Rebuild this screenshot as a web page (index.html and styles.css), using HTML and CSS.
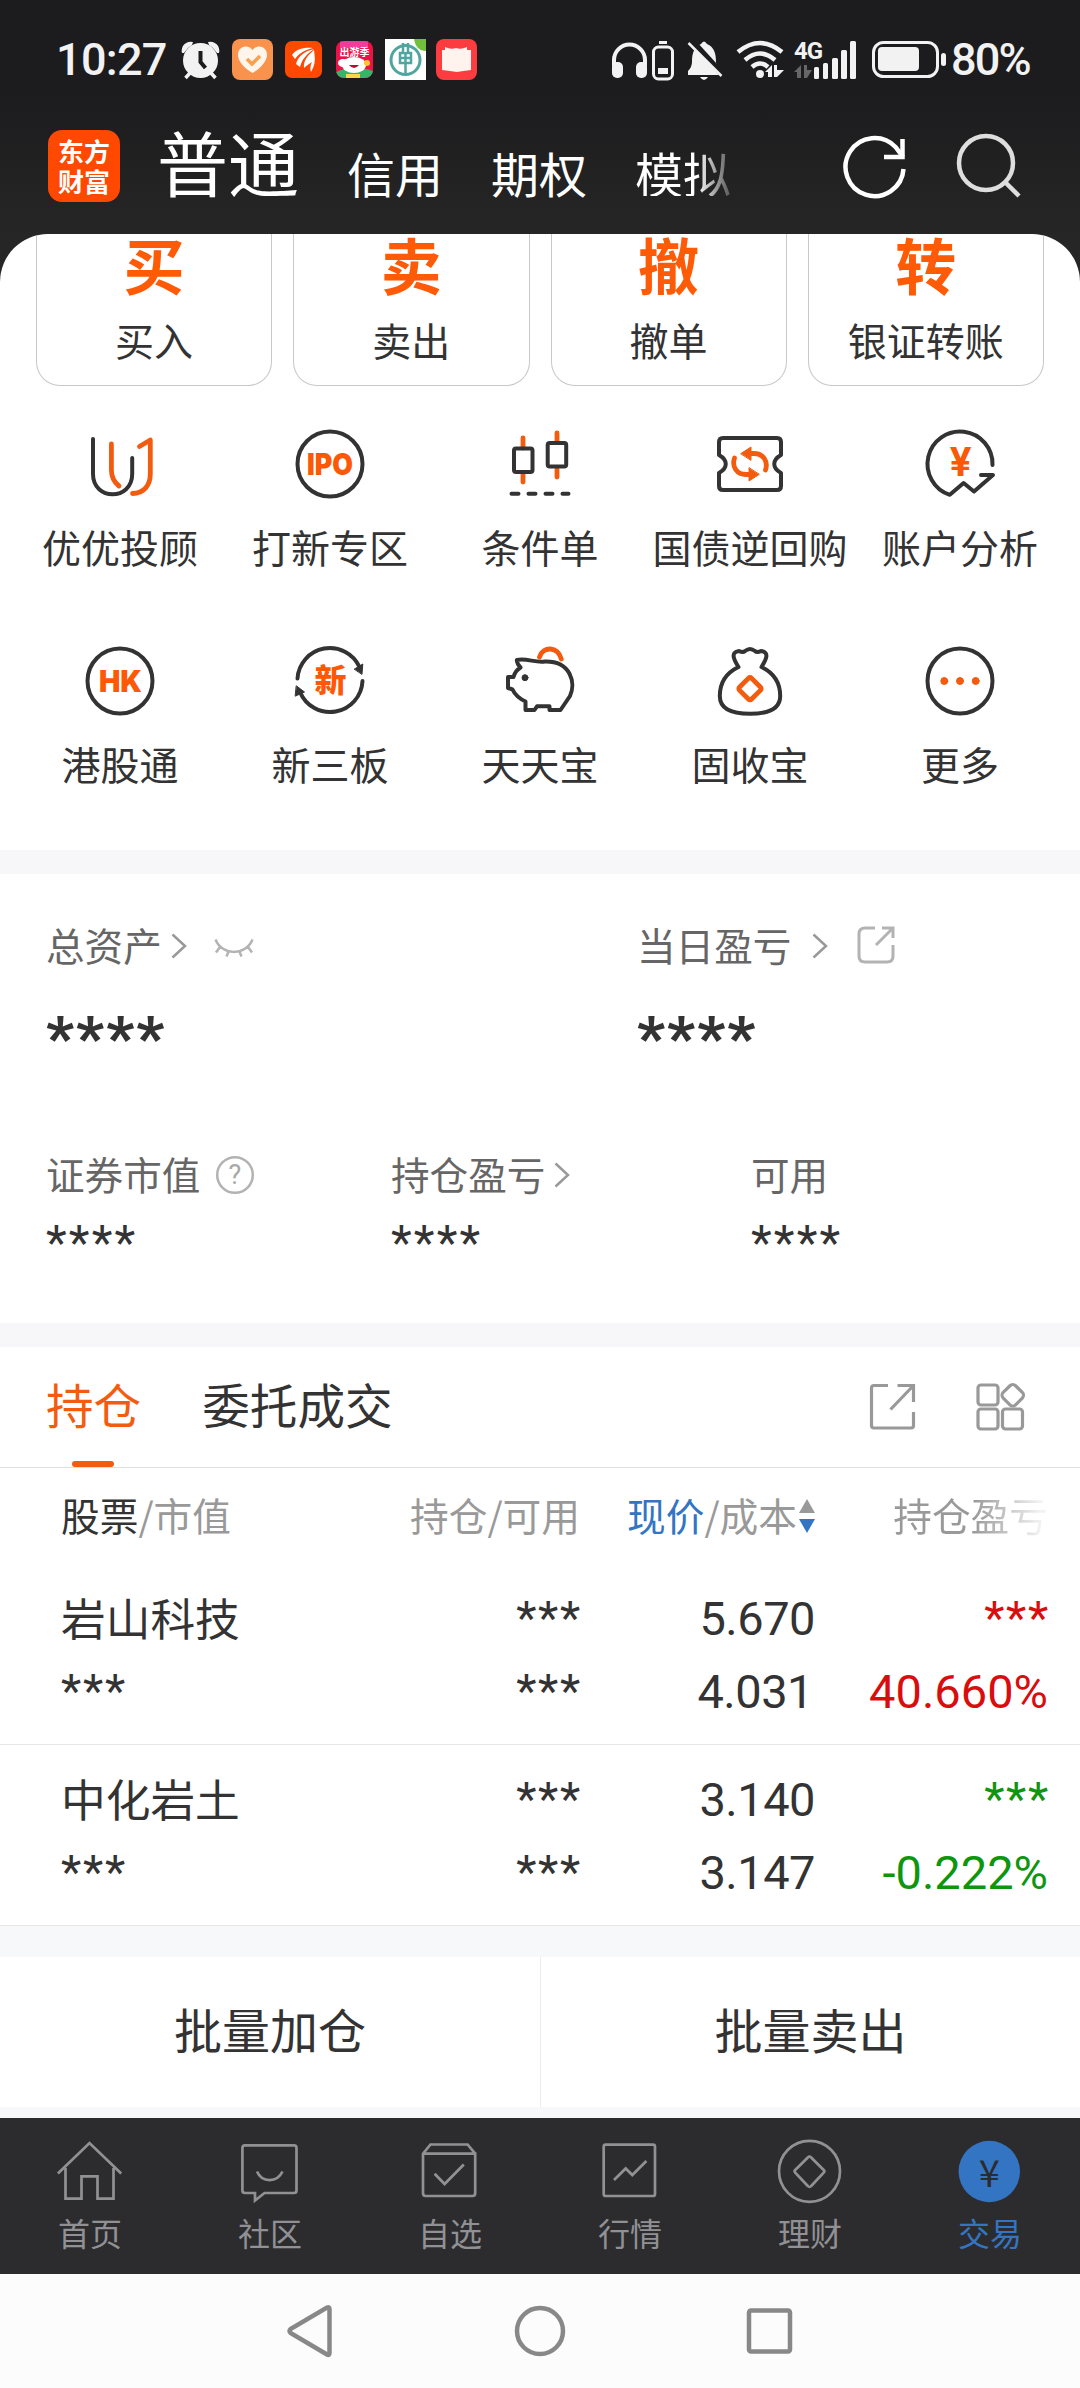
FILE: index.html
```html
<!DOCTYPE html>
<html lang="zh-CN">
<head>
<meta charset="utf-8">
<title>交易</title>
<link rel="stylesheet" href="styles.css">
</head>
<body>
<div class="app">
  <header class="top">
    <div class="status">
      <span class="clock">10:27</span>
      <svg width="47" height="48" viewBox="178 36 47 48"><g fill="#f2f2f2"><circle cx="200.500" cy="60.500" r="17.500"/><path d="M182 53a9 9 0 0 1 11-11l-1 3a22 22 0 0 0-8 8zM219 53a9 9 0 0 0-11-11l1 3a22 22 0 0 1 8 8z"/></g><path d="M190 73l-4.500 5M211 73l4.500 5" stroke="#f2f2f2" stroke-width="3.500"/><path d="M200.500 51v11l5 6" fill="none" stroke="#1c1c1e" stroke-width="4"/></svg>
      <svg width="54" height="48" viewBox="225 36 54 48"><rect x="232" y="39" width="41" height="41" rx="8" fill="#f9924c"/><path d="M252.500 73C244 68 238 61 238 55c0-9 10-11 14.500-5C257 44 267 46 267 55c0 6-6 13-14.500 18z" fill="#fff5ea"/><path d="M247 59l5 5 8-8" fill="none" stroke="#f9a050" stroke-width="3.500"/></svg>
      <svg width="50" height="48" viewBox="279 36 50 48"><rect x="285" y="41" width="37" height="37" rx="7" fill="#ff4800"/><path d="M292 55c4-6 12-8 21-7-8 2-14 5-18 11zM296 64c2-8 9-13 18-15-7 5-12 10-14 18zM304 68c-1-7 4-13 10-18 1 8 2 14-3 22-1-3-1-6 1-10-3 2-6 4-8 6z" fill="#fff"/></svg>
      <svg width="50" height="48" viewBox="329 36 50 48"><clipPath id="trip"><rect x="336" y="41" width="37" height="37" rx="8"/></clipPath><g clip-path="url(#trip)"><path fill="#ea1246" d="M336 41h37v37h-37z"/><path fill="#f03c9b" d="M340 41h28v7h-28z"/><path fill="#35b56b" d="M336 72q16-8 37-1v7h-37z"/><ellipse cx="354" cy="65" rx="12" ry="8" fill="#fff"/><ellipse cx="343" cy="63" rx="5" ry="4" fill="#fff"/><path d="M349 65q5 6 10 0z" fill="#b80b31"/><path d="M346 74h14v4h-14z" fill="#ffd54c"/><circle cx="367" cy="63" r="3" fill="#ffc52e"/></g><text x="354.500" y="56" class="trip-label">出游季</text></svg>
      <svg width="52" height="48" viewBox="379 36 52 48"><path fill="#fff" d="M385 39h41v41h-41z"/><path fill="#72bf3c" d="M414 39h12v12q-10 0-12-12z"/><g fill="none" stroke="#50a69f"><circle cx="405.500" cy="60" r="14.500" stroke-width="3"/><path stroke-width="2.500" d="M405.500 64v10M403 43v10h-3v10h11V53h-3V43M400 58h11M405.500 52v11"/></g></svg>
      <svg width="50" height="48" viewBox="431 36 50 48"><rect x="436" y="39" width="41" height="41" rx="8" fill="#fd3c40"/><path d="M442 50h3v-3q6 3 11 1 5 2 11-1v3h4v20q-8 1-14 2-7-1-15-2z" fill="#fff3ee"/></svg>
      <div class="status-right">
        <svg width="44" height="48" viewBox="605 36 44 48"><path d="M614 66v-6a15.500 15.500 0 0 1 31 0v6" fill="none" stroke="#f2f2f2" stroke-width="4"/><rect x="612" y="62" width="11" height="16" rx="5" fill="#f2f2f2"/><rect x="636" y="62" width="11" height="16" rx="5" fill="#f2f2f2"/></svg>
        <svg width="31" height="48" viewBox="649 36 31 48"><rect x="653.500" y="47" width="19" height="32" rx="5" fill="none" stroke="#f2f2f2" stroke-width="3"/><path d="M659 41h8v3h-8zM658 68h10v6h-10z" fill="#f2f2f2"/></svg>
        <svg width="51" height="48" viewBox="680 36 51 48"><path d="M688 75v-4q4-4 4-9c0-9 2-15 9-18q3-5 6 0c7 3 9 9 9 18q0 5 4 9v4z" fill="#f2f2f2"/><path d="M700 77h8q-4 6-8 0z" fill="#f2f2f2"/><path d="M692 41l31 34" stroke="#1c1c1e" stroke-width="6"/><path d="M688.500 43l33 33" stroke="#f2f2f2" stroke-width="2.500"/></svg>
        <svg width="58" height="48" viewBox="731 36 58 48"><g fill="none" stroke="#f2f2f2" stroke-width="4.500"><path d="M738 52q22-18 44 0M745 60q15-13 30 0M752 67q8-7 16 0"/></g><circle cx="760" cy="74" r="4" fill="#f2f2f2"/><path d="M765 72l7-7v12h-4v-5zM774 77V65h3v5h7l-7 7z" fill="#f2f2f2"/></svg>
        <svg width="73" height="48" viewBox="789 36 73 48"><text x="794" y="59" class="net">4G</text><path d="M794 72l7-7v13h-4v-6zM804 78V65h3v5h5l-5 8z" fill="#666"/><g fill="#f2f2f2"><rect x="814" y="67" width="5" height="12" rx="1.500"/><rect x="823" y="63" width="5" height="16" rx="1.500"/><rect x="832" y="58" width="6" height="21" rx="1.500"/><rect x="841" y="50" width="6" height="29" rx="1.500"/><rect x="850" y="41" width="6" height="38" rx="1.500"/></g></svg>
        <svg width="88" height="48" viewBox="862 36 88 48"><rect x="873.500" y="42.500" width="64" height="34" rx="10" fill="none" stroke="#f2f2f2" stroke-width="3"/><rect x="878" y="47" width="41" height="24" rx="4" fill="#f2f2f2"/><rect x="941" y="53" width="5" height="13" rx="2.500" fill="#f2f2f2"/></svg>
        <span class="percent">80%</span>
      </div>
    </div>
    <nav class="accounts">
      <div class="logo"><span>东方</span><span>财富</span></div>
      <span class="account account-active">普通</span>
      <span class="account">信用</span>
      <span class="account">期权</span>
      <span class="account account-fade">模拟</span>
      <div class="top-actions">
        <svg width="70" height="70" viewBox="842 131 70 70" fill="none" stroke="#fff" stroke-width="4.500"><path d="M904.500 168a29 29 0 1 1-8-22L904 156"/><path d="M903.500 138v18H885"/></svg>
        <svg width="70" height="70" viewBox="955 132 70 70" fill="none" stroke="#dedede" stroke-width="4.500"><circle cx="987" cy="163" r="27"/><path d="M1006 182l14 14"/></svg>
      </div>
    </nav>
  </header>

  <main class="sheet">
    <section class="quick">
      <div class="quick-card"><b>买</b><span>买入</span></div>
      <div class="quick-card"><b>卖</b><span>卖出</span></div>
      <div class="quick-card"><b>撤</b><span>撤单</span></div>
      <div class="quick-card"><b>转</b><span>银证转账</span></div>
    </section>

    <section class="services">
      <div class="service"><svg viewBox="0 0 80 80"><path d="M13 15V50C13 77 52.200 77 52.200 50V34"/><path class="o" d="M31.400 20V46Q31.400 56 39 62M52.500 69.500C64 69.500 70.300 61 70.300 50V16L59.500 22.500"/></svg><span>优优投顾</span></div>
      <div class="service"><svg viewBox="0 0 80 80"><circle cx="40" cy="40" r="32.500"/><text x="17" y="51" textLength="46" lengthAdjust="spacingAndGlyphs" class="word">IPO</text></svg><span>打新专区</span></div>
      <div class="service"><svg viewBox="0 0 80 80"><path class="o" d="M23 14V24M23 50V58M57 9V18M57 45V53"/><rect x="14" y="24.500" width="18.500" height="23.500" rx="2"/><rect x="47.700" y="19" width="18.500" height="23.500" rx="2"/><path d="M11.500 69.700h7M28.500 69.700h7M45.500 69.700h7M62.500 69.700h6"/></svg><span>条件单</span></div>
      <div class="service"><svg viewBox="0 0 80 80"><path d="M13 14H67Q71 14 71 18V31C62 36 62 44 71 49V62Q71 66 67 66H13Q9 66 9 62V49C18 44 18 36 9 31V18Q9 14 13 14z"/><path class="o" d="M55.500 46C58.500 37 53 29.500 44 29.500H38M24.500 34C21.500 43 27 50.500 36 50.500H42"/><path class="of" d="M31 29.500L41 23V36zM49 50.500L39 57V44z"/></svg><span>国债逆回购</span></div>
      <div class="service"><svg viewBox="0 0 80 80"><path d="M72.500 41A32.500 32.500 0 1 0 29.800 70.800L43.600 59L54 67.500L73 51H61"/><text x="40.500" y="51.500" class="yen">¥</text></svg><span>账户分析</span></div>
      <div class="service"><svg viewBox="0 0 80 80"><circle cx="40" cy="40" r="32.500"/><text x="19" y="51" textLength="43" lengthAdjust="spacingAndGlyphs" class="word">HK</text></svg><span>港股通</span></div>
      <div class="service"><svg viewBox="0 0 80 80"><path d="M7.500 37.500A32.500 32.500 0 0 1 69.500 26M72.500 40A32.500 32.500 0 0 1 10 51"/><path class="df" d="M64.500 28L72.800 23L72 33zM6.500 45L14.500 51L5.500 55z"/><text x="40.500" y="51" class="xin">新</text></svg><span>新三板</span></div>
      <div class="service"><svg viewBox="0 0 80 80"><path d="M8 36V47L12.500 48.500Q16 56 25.500 60.500V69H34.500L37 65.300H49.500V69H60.500L70 55C76 42 71 20 45 20.500C35 22 27 17 16.800 19Q17 23 20.500 26.500Q15 30 13.500 36z"/><circle class="df" cx="25" cy="36.700" r="3"/><path class="o" d="M39.500 16C43 5 58 5 61.300 18"/></svg><span>天天宝</span></div>
      <div class="service"><svg viewBox="0 0 80 80"><path d="M28.500 26C16 32 9.800 42 9.800 55C9.800 67 20 72.800 40 72.800S70.200 67 70.200 55C70.200 42 64 32 51.500 26C56 19 60 11 51 10Q47 12 45 10Q40 6 35 10Q33 12 29 10C20 11 24 19 28.500 26z"/><rect class="o" x="31.500" y="39.200" width="17" height="17" rx="2" transform="rotate(45 40 47.700)"/></svg><span>固收宝</span></div>
      <div class="service"><svg viewBox="0 0 80 80"><circle cx="40" cy="40" r="32.500"/><g class="of"><circle cx="24.300" cy="40" r="3.500"/><circle cx="40" cy="40" r="3.500"/><circle cx="55.700" cy="40" r="3.500"/></g></svg><span>更多</span></div>
    </section>

    <section class="assets">
      <div class="asset-main">
        <div class="metric">
          <div class="metric-label">总资产<svg class="chev" viewBox="0 0 16 26"><path d="M1.500 1.500L14 13L1.500 24.500"/></svg><svg class="eye" viewBox="0 0 40 20"><path d="M1.500 1.500C8 18 32 18 38.500 1.500M6 9L2 14.500M14.500 13.500L12.500 18.500M25.500 13.500L27.500 18.500M34 9L38 14.500"/></svg></div>
          <div class="metric-value">****</div>
        </div>
        <div class="metric">
          <div class="metric-label">当日盈亏<svg class="chev chev-wide" viewBox="0 0 16 26"><path d="M1.500 1.500L14 13L1.500 24.500"/></svg><svg class="share-small" viewBox="0 0 38 38"><path d="M18 2H8Q2 2 2 8V30Q2 36 8 36H30Q36 36 36 30V19M25 2H36V12M36 2L19 19"/></svg></div>
          <div class="metric-value">****</div>
        </div>
      </div>
      <div class="asset-sub">
        <div class="metric">
          <div class="metric-label">证券市值<svg class="help" viewBox="0 0 40 40"><circle cx="20" cy="20" r="17.800"/><text x="20" y="29">?</text></svg></div>
          <div class="metric-value">****</div>
        </div>
        <div class="metric">
          <div class="metric-label">持仓盈亏<svg class="chev" viewBox="0 0 16 26"><path d="M1.500 1.500L14 13L1.500 24.500"/></svg></div>
          <div class="metric-value">****</div>
        </div>
        <div class="metric">
          <div class="metric-label">可用</div>
          <div class="metric-value">****</div>
        </div>
      </div>
    </section>

    <section class="holdings">
      <div class="tabs">
        <span class="tab tab-active">持仓</span>
        <span class="tab">委托成交</span>
        <div class="tab-actions">
          <svg width="48" height="48" viewBox="0 0 48 48"><path d="M19 2.500H5Q2.500 2.500 2.500 5V42.500Q2.500 45 5 45H42Q44.500 45 44.500 42.500V29M28.500 2.500H44.500V19M44 3L21.500 26.500"/></svg>
          <svg width="52" height="50" viewBox="0 0 52 50"><rect x="3" y="3" width="20" height="20" rx="3"/><rect x="3" y="27" width="20" height="20" rx="3"/><rect x="27.500" y="27" width="20" height="20" rx="3"/><rect x="29" y="4.500" width="17.500" height="17.500" rx="4" transform="rotate(45 37.700 13.300)"/></svg>
        </div>
      </div>
      <div class="row row-head">
        <span><em class="strong">股票</em>/市值</span>
        <span>持仓/可用</span>
        <span class="sorted"><em class="blue">现价</em>/成本<svg viewBox="0 0 16 34"><path fill="#999" d="M8 0L16 14H0z"/><path fill="#3375c3" d="M0 20H16L8 34z"/></svg></span>
        <span class="fade">持仓盈亏</span>
      </div>
      <div class="row row-stock">
        <span class="name">岩山科技</span><span class="stars">***</span><span>5.670</span><span class="stars up">***</span>
        <span class="stars">***</span><span class="stars">***</span><span class="narrow">4.031</span><span class="rate up">40.660%</span>
      </div>
      <div class="row row-stock">
        <span class="name">中化岩土</span><span class="stars">***</span><span>3.140</span><span class="stars down">***</span>
        <span class="stars">***</span><span class="stars">***</span><span>3.147</span><span class="rate down">-0.222%</span>
      </div>
    </section>

    <section class="batch">
      <div>批量加仓</div>
      <div>批量卖出</div>
    </section>
  </main>

  <nav class="tabbar">
    <div class="tabitem"><svg viewBox="0 0 80 80"><path d="M7.900 42.500L39.500 12L71.200 42.500M15.500 37V67.700H31.500V45.300H47.500V67.700H63.500V37"/></svg><span>首页</span></div>
    <div class="tabitem"><svg viewBox="0 0 80 80"><path d="M15 14.300H64Q66.500 14.300 66.500 17V59.500Q66.500 62 64 62H34.500L25 69.500V62H15Q12.400 62 12.400 59.500V17Q12.400 14.300 15 14.300zM27 40.500C32 52 47 52 52.500 40.500"/></svg><span>社区</span></div>
    <div class="tabitem"><svg viewBox="0 0 80 80"><path d="M13 22.700H65.200V62Q65.200 65 62.500 65H15.500Q13 65 13 62V22.700L20.500 13.500H57.600L65.200 22.700M24.600 42.700L34.600 53L53.800 33.500"/></svg><span>自选</span></div>
    <div class="tabitem"><svg viewBox="0 0 80 80"><rect x="13.700" y="13.700" width="51.300" height="51.300" rx="2"/><path d="M24 49L35.700 37.500L42.300 44L56.400 30"/></svg><span>行情</span></div>
    <div class="tabitem"><svg viewBox="0 0 80 80"><circle cx="39.500" cy="40.300" r="30.500"/><path d="M37.800 26.500Q39.500 24.500 41.200 26.500L53.700 39Q55 40.300 53.700 41.700L41.200 55Q39.500 57 37.800 55L25.200 41.700Q24 40.300 25.200 39z"/></svg><span>理财</span></div>
    <div class="tabitem tabitem-active"><svg viewBox="0 0 80 80"><circle class="disc" cx="39.300" cy="40.500" r="30.700"/><text x="39.300" y="55.500">¥</text></svg><span>交易</span></div>
  </nav>
  <footer class="sysnav">
    <svg width="50" height="56" viewBox="0 0 50 56"><path d="M42 4.500Q44.500 3.500 44.500 6V50Q44.500 53 42 51.500L5.500 30Q3.500 28 5.500 26z"/></svg>
    <svg width="56" height="56" viewBox="0 0 56 56"><circle cx="28" cy="28" r="23"/></svg>
    <svg width="50" height="56" viewBox="0 0 50 56"><rect x="4" y="7.500" width="41" height="41" rx="2"/></svg>
  </footer>
</div>
</body>
</html>
```

FILE: styles.css
```css
* { box-sizing: border-box; }
body {
  margin: 0;
  background: #fff;
  color: #333;
  font-family: "Noto Sans CJK SC", sans-serif;
}
svg { display: block; flex: none; }
em { font-style: normal; }
.app { width: 1080px; height: 2388px; display: flex; flex-direction: column; overflow: hidden; background: #262626; }

/* Header */
.top { height: 234px; flex: none; background: linear-gradient(#1c1c1e 40%, #262626); }
.status { display: flex; align-items: center; height: 120px; padding-left: 56px; }
.clock, .percent { font: 500 45px/48px Roboto, sans-serif; color: #f2f2f2; }
.clock { width: 122px; letter-spacing: -0.7px; }
.percent { letter-spacing: -1.8px; padding-left: 1px; }
.status-right { display: flex; align-items: center; margin-left: 124px; }
.net { font: 700 24px Roboto, sans-serif; fill: #f2f2f2; letter-spacing: -1px; }
.trip-label { font: 700 10px "Noto Sans CJK SC", sans-serif; fill: #fff; text-anchor: middle; }
.accounts { display: flex; align-items: flex-end; height: 82px; padding: 0 56px 0 48px; color: #fff; }
.logo {
  width: 72px; height: 72px; border-radius: 14px; background: #ff4800;
  display: flex; flex-direction: column; justify-content: center; align-items: center;
  font-size: 26px; font-weight: 700; line-height: 30px;
}
.account { font-size: 48px; line-height: 48px; margin: 0 48px 6px 0; }
.account-active { font-size: 71px; line-height: 71px; margin: 0 48px 6px 37px; }
.account-fade { margin-right: 0; background: linear-gradient(90deg, #fff 64%, #555 100%); -webkit-background-clip: text; background-clip: text; color: transparent; }
.top-actions { display: flex; gap: 43px; margin-left: auto; }

/* Quick trade cards */
.sheet { height: 1884px; flex: none; background: #fff; border-radius: 48px 48px 0 0; overflow: hidden; }
.quick { display: grid; grid-template-columns: repeat(4, 1fr); gap: 21px; padding: 0 36px; height: 152px; }
.quick-card {
  border: 1px solid #c8c8c8; border-top: 0; border-radius: 0 0 24px 24px;
  display: flex; flex-direction: column; align-items: center;
}
.quick-card b { font-size: 61px; line-height: 57px; font-weight: 700; color: #ff5a05; margin-top: 1px; height: 67px; }
.quick-card span { font-size: 39px; line-height: 39px; margin-top: 18px; }

/* Services */
.services { display: grid; grid-template-columns: repeat(5, 210px); grid-auto-rows: 217px; padding: 38px 15px 0; height: 464px; }
.service { display: flex; flex-direction: column; align-items: center; white-space: nowrap; }
.service svg { width: 80px; height: 80px; fill: none; stroke: #333; stroke-width: 4; stroke-linecap: round; stroke-linejoin: round; }
.service span { font-size: 39px; line-height: 40px; margin-top: 22px; }
.service .o { stroke: #f35c0e; stroke-width: 4.8; }
.service .of { fill: #f35c0e; stroke: #f35c0e; stroke-width: 1; }
.service .df { fill: #333; stroke-width: 1; }
.service text { fill: #fc5805; stroke: none; }
.service .word { font: 900 30px Inter, sans-serif; }
.service .yen { font: 700 39px Inter, sans-serif; text-anchor: middle; }
.service .xin { font: 900 32px "Noto Sans CJK SC", sans-serif; text-anchor: middle; }

/* Assets */
.assets { border-top: 24px solid #f7f7fa; border-bottom: 24px solid #f7f7fa; height: 497px; }
.asset-main { display: grid; grid-template-columns: 591px 1fr; padding: 50px 0 0 46px; height: 279px; }
.asset-sub { display: grid; grid-template-columns: 345px 360px 1fr; padding: 0 0 0 46px; }
.metric-label { display: flex; align-items: center; height: 40px; font-size: 38.6px; line-height: 40px; color: #666; }
.metric-label svg { fill: none; stroke: #b3b3b3; stroke-width: 2.5; position: relative; top: 2px; }
.metric-label .chev { width: 16px; height: 26px; margin-left: 9px; stroke: #999; }
.metric-label .chev-wide { margin-left: 21px; }
.metric-label .eye { width: 40px; height: 20px; margin-left: 27px; top: 4px; }
.metric-label .share-small { width: 38px; height: 38px; margin-left: 29px; stroke-width: 3; top: 1px; }
.metric-label .help { width: 40px; height: 40px; margin-left: 15px; }
.help text { font: 400 27px Roboto, sans-serif; fill: #a8a8a8; stroke: none; text-anchor: middle; }
.metric-value { font: 400 48px/48px Roboto, sans-serif; letter-spacing: 2.200px; margin-top: 26px; }
.asset-main .metric-value { font-size: 60px; font-weight: 900; margin-top: 50px; letter-spacing: 2.200px; }

/* Holdings */
.tabs { display: flex; align-items: center; height: 121px; padding: 0 53px 0 46px; border-bottom: 1px solid #e0e0e0; }
.tab { font-size: 47.6px; line-height: 120px; margin-right: 61px; position: relative; top: -3px; }
.tab-active { color: #f35c0e; }
.tab-active::after { content: ""; position: absolute; left: 26px; bottom: -3px; width: 42px; height: 6px; border-radius: 3px; background: #f35c0e; }
.tab-actions { display: flex; align-items: center; gap: 58px; margin-left: auto; }
.tab-actions svg { fill: none; stroke: #999; stroke-width: 3.200; }
.row { display: grid; grid-template-columns: 319px 200px 235px 233px; padding-left: 61px; text-align: right; }
.row > span:nth-child(4n+1) { text-align: left; }
.row-head { height: 96px; align-items: center; font-size: 38.7px; line-height: 92px; padding-bottom: 4px; color: #999; white-space: nowrap; }
.strong { color: #333; }
.blue { color: #3375c3; }
.sorted { display: flex; align-items: center; justify-content: flex-end; }
.sorted svg { width: 16px; height: 34px; margin: 4px 0 0 2px; }
.fade { justify-self: end; background: linear-gradient(90deg, #999 52%, #f2f2f2 95%); -webkit-background-clip: text; background-clip: text; color: transparent; }
.row-stock {
  height: 181px; padding-top: 18px; grid-auto-rows: 73px; align-content: start;
  border-bottom: 1px solid #e6e6e6; font: 400 47px/73px Roboto, sans-serif; letter-spacing: -0.500px;
}
.row-stock .name { font: 400 44.7px/70px "Noto Sans CJK SC", sans-serif; letter-spacing: 0; }
.row-stock .stars { letter-spacing: 1.700px; margin-right: -2px; line-height: 71px; }
.row-stock .rate { letter-spacing: 0; }
.narrow { padding-right: 2px; }
.up { color: #d90d0d; }
.down { color: #0f960f; }

/* Batch actions */
.batch { display: grid; grid-template-columns: 1fr 1fr; height: 193px; border-top: 31px solid #f7f8fa; border-bottom: 12px solid #f7f8fa; font-size: 48px; line-height: 143px; text-align: center; }
.batch div + div { border-left: 1px solid #ececec; }

/* Bottom tab bar */
.tabbar { display: grid; grid-template-columns: repeat(6, 1fr); height: 156px; flex: none; background: #2c2c2e; color: #919195; }
.tabitem { display: flex; flex-direction: column; align-items: center; padding-top: 13px; }
.tabitem svg { width: 80px; height: 80px; fill: none; stroke: currentColor; stroke-width: 2.700; }
.tabitem span { font-size: 32px; line-height: 32px; margin-top: 5px; }
.tabitem-active { color: #3375c3; }
.tabitem .disc { fill: currentColor; stroke: none; }
.tabitem text { font: 400 38px "Noto Sans CJK SC", sans-serif; fill: #2c2c2e; stroke: none; text-anchor: middle; }
.sysnav { display: flex; align-items: center; justify-content: center; gap: 177px; height: 114px; flex: none; background: #fcfcfc; }
.sysnav svg { fill: none; stroke: #888; stroke-width: 4.500; }
```
